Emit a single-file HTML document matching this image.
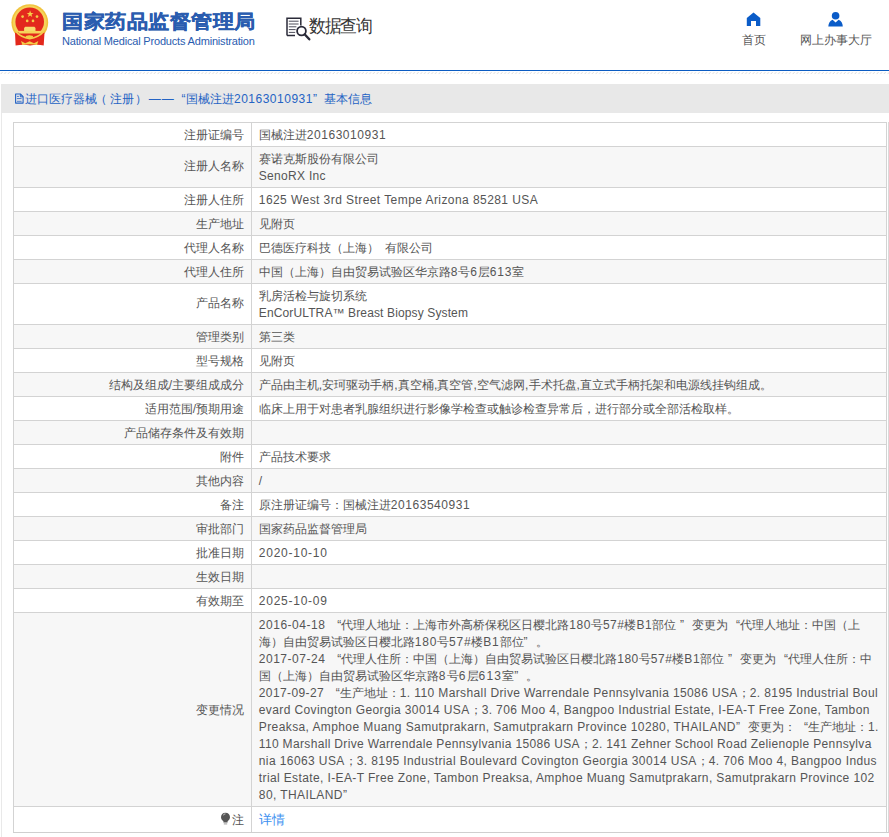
<!DOCTYPE html>
<html><head><meta charset="utf-8">
<style>
*{margin:0;padding:0;box-sizing:border-box}
html,body{width:889px;height:837px;overflow:hidden;background:#fff;font-family:"Liberation Sans",sans-serif;color:#555}
div{position:absolute;white-space:nowrap}
.bl{left:0;top:70px;width:889px;height:1px;background:#0b5cc2}
.hatch{left:0;top:72px;width:889px;height:2px;background:repeating-linear-gradient(45deg,#fff 0 1.6px,#dcdcdc 1.6px 2.6px,#fff 2.6px 3.6px)}
.title1{left:62px;top:8px;font-size:21px;line-height:26px;font-weight:bold;color:#2a5caf;letter-spacing:0.5px;transform:scaleY(0.9);transform-origin:0 23px;-webkit-text-stroke:0.4px #2a5caf}
.title2{left:62px;top:35px;font-size:11px;line-height:12px;color:#2a5caf;letter-spacing:-0.18px}
.sq{left:309px;top:14px;font-size:18px;line-height:24px;color:#333;letter-spacing:-1.4px;transform:scaleX(0.937);transform-origin:0 0}
.nav{top:32px;font-size:12px;line-height:17px;color:#555}
.pl{left:1px;top:113px;width:1px;height:724px;background:#e9e9e9}
.bar{left:1px;top:84px;width:888px;height:29px;background:#e8e8e8}
.bt{top:91px;font-size:12px;line-height:17px;color:#2463c4}
.bg{left:14px;width:872px;background:#f7f7f7}
.hl{left:13px;width:874px;height:1px;background:#d3d3d3}
.vl{top:122px;width:1px;height:710px;background:#d3d3d3}
.lab{right:645px;font-size:12px;line-height:17px;color:#555}
.val{left:258.8px;font-size:12px;line-height:17px;color:#555}
.q1{display:inline-block;width:12px;text-align:right}.q2{display:inline-block;width:12px;text-align:left}
a{color:#3b8ff0;text-decoration:none;font-size:13px}
</style></head><body>
<svg style="position:absolute;left:8px;top:2px" width="44" height="48" viewBox="8 2 44 48">
  <circle cx="29.8" cy="22.6" r="18.4" fill="#f1c33c"/>
  <circle cx="29.8" cy="22.4" r="16.8" fill="#f6d35a"/>
  <path d="M15 32.5 H44.5 L43.7 45.4 Q37 44.2 30 45.4 Q23 44.2 15.6 45.6 Z" fill="#e3281c"/>
  <circle cx="29.7" cy="21.8" r="14.3" fill="#e3291d"/>
  <path d="M15.8 31.5 Q21 37.5 29.7 38.6 Q38.5 37.5 43.8 31.5" fill="none" stroke="#f4cf4c" stroke-width="1.7"/>
  <polygon points="30.1,10.4 31,12.9 33.5,12.9 31.5,14.4 32.2,16.9 30.1,15.4 28,16.9 28.7,14.4 26.7,12.9 29.2,12.9" fill="#f6d048"/>
  <circle cx="22.6" cy="16.6" r="1.35" fill="#f3cc48"/>
  <circle cx="37" cy="16.6" r="1.35" fill="#f3cc48"/>
  <circle cx="27.2" cy="20.9" r="1.35" fill="#f3cc48"/>
  <circle cx="33" cy="20.9" r="1.35" fill="#f3cc48"/>
  <path d="M25.2 26.8H34.4L35.5 28V30.9H24.1V28Z" fill="#f8dc6e"/>
  <rect x="18.9" y="30.9" width="22.7" height="2.6" fill="#f6d35a"/>
  <ellipse cx="29.4" cy="36.8" rx="3.7" ry="1.5" fill="#f3cc48"/>
  <path d="M21 41 L25.2 43.2 L29.6 41.2 L34 43.2 L38.3 41 L37 45 Q30 43.6 22.3 45 Z" fill="#f3cc48"/>
</svg>
<div class="title1">国家药品监督管理局</div>
<div class="title2">National Medical Products Administration</div>
<svg style="position:absolute;left:284px;top:16px" width="28" height="26" viewBox="284 16 28 26">
  <path d="M287 35.5V18.3H300.8V25.5" fill="none" stroke="#2a2a38" stroke-width="1.5"/>
  <path d="M287 35.5H295" fill="none" stroke="#2a2a38" stroke-width="1.5"/>
  <path d="M288.8 21.2H298.6M288.8 24H298.6M288.8 26.8H296.4M288.8 29.6H295.6M288.8 32.4H295.2" stroke="#3a3a48" stroke-width="0.9"/>
  <circle cx="301.5" cy="31" r="4.4" fill="#fff" stroke="#2a2a38" stroke-width="1.8"/>
  <path d="M304.6 34.3L309.3 39.3" stroke="#2a2a38" stroke-width="2.4" stroke-linecap="round"/>
</svg>
<div class="sq">数据查询</div>
<svg style="position:absolute;left:746px;top:12px" width="15" height="15" viewBox="0 0 15 15">
  <path d="M7.5 0.5L14.3 6V14H10V9H5V14H0.8V6Z" fill="#0b5cc8"/>
</svg>
<div class="nav" style="left:741.5px">首页</div>
<svg style="position:absolute;left:827px;top:11px" width="17" height="17" viewBox="0 0 17 17">
  <circle cx="8.6" cy="4.7" r="3.8" fill="#0b5cc8"/>
  <path d="M1.3 15.5Q1.6 10.6 5.6 8.8L8.6 11.6L11.6 8.8Q15.6 10.6 15.8 15.5Z" fill="#0b5cc8"/>
</svg>
<div class="nav" style="left:799.6px">网上办事大厅</div>
<div class="bl"></div>
<svg style="position:absolute;left:0;top:71px" width="889" height="4"><defs><pattern id="hp" width="3.65" height="4" patternUnits="userSpaceOnUse"><path d="M0.6 3.1L2.4 1.1" stroke="#d6d6d6" stroke-width="0.9"/></pattern></defs><rect width="889" height="4" fill="url(#hp)"/></svg>
<div class="bar"></div>
<div class="pl"></div>
<svg style="position:absolute;left:13px;top:91px" width="12" height="15" viewBox="0 0 12 15">
  <path d="M2.6 3H7.4L10.1 5.7V12.1H2.6Z" fill="none" stroke="#2463c4" stroke-width="1.1" stroke-linejoin="round"/>
  <path d="M7.3 3.2V5.8H10" fill="none" stroke="#2463c4" stroke-width="1"/>
  <path d="M3.9 5.4H5.9M3.9 7.6H8.6M3.9 10.3H8.6" stroke="#3a6fc8" stroke-width="0.9"/>
</svg>
<div class="bt" style="left:24.8px">进口医疗器械</div>
<div class="bt" style="left:94.7px">（</div>
<div class="bt" style="left:109.6px">注册</div>
<div class="bt" style="left:134.6px">）</div>
<div class="bt" style="left:148.8px;letter-spacing:1px">——</div>
<div class="bt" style="left:181.6px">“</div>
<div class="bt" style="left:186px">国械注进<span style="letter-spacing:0.5px">20163010931”</span></div>
<div class="bt" style="left:324px">基本信息</div>
<div class="bg" style="top:147px;height:40px"></div>
<div class="bg" style="top:212px;height:23px"></div>
<div class="bg" style="top:260px;height:23px"></div>
<div class="bg" style="top:325px;height:23px"></div>
<div class="bg" style="top:373px;height:23px"></div>
<div class="bg" style="top:421px;height:23px"></div>
<div class="bg" style="top:469px;height:23px"></div>
<div class="bg" style="top:517px;height:23px"></div>
<div class="bg" style="top:565px;height:23px"></div>
<div class="bg" style="top:613px;height:193px"></div>
<div class="hl" style="top:122px"></div>
<div class="hl" style="top:146px"></div>
<div class="hl" style="top:187px"></div>
<div class="hl" style="top:211px"></div>
<div class="hl" style="top:235px"></div>
<div class="hl" style="top:259px"></div>
<div class="hl" style="top:283px"></div>
<div class="hl" style="top:324px"></div>
<div class="hl" style="top:348px"></div>
<div class="hl" style="top:372px"></div>
<div class="hl" style="top:396px"></div>
<div class="hl" style="top:420px"></div>
<div class="hl" style="top:444px"></div>
<div class="hl" style="top:468px"></div>
<div class="hl" style="top:492px"></div>
<div class="hl" style="top:516px"></div>
<div class="hl" style="top:540px"></div>
<div class="hl" style="top:564px"></div>
<div class="hl" style="top:588px"></div>
<div class="hl" style="top:612px"></div>
<div class="hl" style="top:806px"></div>
<div class="hl" style="top:832px;width:876px;background:#cfcfcf"></div>
<div class="vl" style="left:13px"></div>
<div class="vl" style="left:251px"></div>
<div class="vl" style="left:886px"></div>
<div class="vl" style="left:888px;height:710px;background:#d9d9d9"></div>
<div class="lab" style="top:127.0px">注册证编号</div>
<div class="lab" style="top:158.3px">注册人名称</div>
<div class="lab" style="top:192.0px">注册人住所</div>
<div class="lab" style="top:216.0px">生产地址</div>
<div class="lab" style="top:240.0px">代理人名称</div>
<div class="lab" style="top:264.0px">代理人住所</div>
<div class="lab" style="top:295.3px">产品名称</div>
<div class="lab" style="top:329.0px">管理类别</div>
<div class="lab" style="top:353.0px">型号规格</div>
<div class="lab" style="top:377.0px">结构及组成/主要组成成分</div>
<div class="lab" style="top:401.0px">适用范围/预期用途</div>
<div class="lab" style="top:425.0px">产品储存条件及有效期</div>
<div class="lab" style="top:449.0px">附件</div>
<div class="lab" style="top:473.0px">其他内容</div>
<div class="lab" style="top:497.0px">备注</div>
<div class="lab" style="top:521.0px">审批部门</div>
<div class="lab" style="top:545.0px">批准日期</div>
<div class="lab" style="top:569.0px">生效日期</div>
<div class="lab" style="top:593.0px">有效期至</div>
<div class="lab" style="top:702.0px">变更情况</div>
<div class="lab" style="top:812px"><svg width="11" height="13" viewBox="0 0 11 13" style="vertical-align:-1px;margin-right:1px"><path d="M5.5 0.8C8.3 0.8 10 2.8 10 5.2C10 7.2 8.6 8.3 7.6 9.2V10.6H3.4V9.2C2.4 8.3 1 7.2 1 5.2C1 2.8 2.7 0.8 5.5 0.8Z" fill="#555"/><path d="M3.8 11.4H7.2V12.4H3.8Z" fill="#999"/><path d="M3.2 3.2Q4 2 5.4 1.9" stroke="#ddd" stroke-width="0.9" fill="none"/></svg>注</div>
<div class="val" id="v0" style="top:127px">国械注进<span class="e" style="letter-spacing:0.538px">20163010931</span></div>
<div class="val" id="v1" style="top:151px">赛诺克斯股份有限公司</div>
<div class="val" id="v2" style="top:168px"><span class="e" style="letter-spacing:0.300px">SenoRX Inc</span></div>
<div class="val" id="v3" style="top:192px"><span class="e" style="letter-spacing:0.432px">1625 West 3rd Street Tempe Arizona 85281 USA</span></div>
<div class="val" id="v4" style="top:216px">见附页</div>
<div class="val" id="v5" style="top:240px">巴德医疗科技（上海）<span class="e" style="letter-spacing:2.600px"> </span>有限公司</div>
<div class="val" id="v6" style="top:264px">中国（上海）自由贸易试验区华京路<span class="e" style="letter-spacing:0.800px">8</span>号<span class="e" style="letter-spacing:0.800px">6</span>层<span class="e" style="letter-spacing:0.800px">613</span>室</div>
<div class="val" id="v7" style="top:288px">乳房活检与旋切系统</div>
<div class="val" id="v8" style="top:305px"><span class="e" style="letter-spacing:0.127px">EnCorULTRA™ Breast Biopsy System</span></div>
<div class="val" id="v9" style="top:329px">第三类</div>
<div class="val" id="v10" style="top:353px">见附页</div>
<div class="val" id="v11" style="top:377px">产品由主机<span class="e" style="letter-spacing:0.199px">,</span>安珂驱动手柄<span class="e" style="letter-spacing:0.199px">,</span>真空桶<span class="e" style="letter-spacing:0.199px">,</span>真空管<span class="e" style="letter-spacing:0.199px">,</span>空气滤网<span class="e" style="letter-spacing:0.199px">,</span>手术托盘<span class="e" style="letter-spacing:0.199px">,</span>直立式手柄托架和电源线挂钩组成。</div>
<div class="val" id="v12" style="top:401px">临床上用于对患者乳腺组织进行影像学检查或触诊检查异常后，进行部分或全部活检取样。</div>
<div class="val" id="v13" style="top:449px">产品技术要求</div>
<div class="val" id="v14" style="top:473px"><span class="e">/</span></div>
<div class="val" id="v15" style="top:497px">原注册证编号：国械注进<span class="e" style="letter-spacing:0.546px">20163540931</span></div>
<div class="val" id="v16" style="top:521px">国家药品监督管理局</div>
<div class="val" id="v17" style="top:545px"><span class="e" style="letter-spacing:0.750px">2020-10-10</span></div>
<div class="val" id="v18" style="top:593px"><span class="e" style="letter-spacing:0.750px">2025-10-09</span></div>
<div class="val" id="v19" style="top:617px"><span class="e" style="letter-spacing:0.523px">2016-04-18 </span><span class="q1">“</span>代理人地址：上海市外高桥保税区日樱北路<span class="e" style="letter-spacing:0.523px">180</span>号<span class="e" style="letter-spacing:0.523px">57#</span>楼<span class="e" style="letter-spacing:0.523px">B1</span>部位<span class="e" style="letter-spacing:0.523px"> </span><span class="q2">”</span>变更为<span class="q1">“</span>代理人地址：中国（上</div>
<div class="val" id="v20" style="top:634px">海）自由贸易试验区日樱北路<span class="e" style="letter-spacing:0.750px">180</span>号<span class="e" style="letter-spacing:0.750px">57#</span>楼<span class="e" style="letter-spacing:0.750px">B1</span>部位<span class="q2">”</span>。</div>
<div class="val" id="v21" style="top:651px"><span class="e" style="letter-spacing:0.517px">2017-07-24 </span><span class="q1">“</span>代理人住所：中国（上海）自由贸易试验区日樱北路<span class="e" style="letter-spacing:0.517px">180</span>号<span class="e" style="letter-spacing:0.517px">57#</span>楼<span class="e" style="letter-spacing:0.517px">B1</span>部位<span class="e" style="letter-spacing:0.517px"> </span><span class="q2">”</span>变更为<span class="q1">“</span>代理人住所：中</div>
<div class="val" id="v22" style="top:668px">国（上海）自由贸易试验区华京路<span class="e" style="letter-spacing:1.200px">8</span>号<span class="e" style="letter-spacing:1.200px">6</span>层<span class="e" style="letter-spacing:1.200px">613</span>室<span class="q2">”</span>。</div>
<div class="val" id="v23" style="top:685px"><span class="e" style="letter-spacing:0.385px">2017-09-27 </span><span class="q1">“</span>生产地址：<span class="e" style="letter-spacing:0.385px">1. 110 Marshall Drive Warrendale Pennsylvania 15086 USA</span>；<span class="e" style="letter-spacing:0.385px">2. 8195 Industrial Boul</span></div>
<div class="val" id="v24" style="top:702px"><span class="e" style="letter-spacing:0.385px">evard Covington Georgia 30014 USA</span>；<span class="e" style="letter-spacing:0.385px">3. 706 Moo 4, Bangpoo Industrial Estate, I-EA-T Free Zone, Tambon</span></div>
<div class="val" id="v25" style="top:719px"><span class="e" style="letter-spacing:0.399px">Preaksa, Amphoe Muang Samutprakarn, Samutprakarn Province 10280, THAILAND</span><span class="q2">”</span>变更为：<span class="q1">“</span>生产地址：<span class="e" style="letter-spacing:0.399px">1.</span></div>
<div class="val" id="v26" style="top:736px"><span class="e" style="letter-spacing:0.339px">110 Marshall Drive Warrendale Pennsylvania 15086 USA</span>；<span class="e" style="letter-spacing:0.339px">2. 141 Zehner School Road Zelienople Pennsylva</span></div>
<div class="val" id="v27" style="top:753px"><span class="e" style="letter-spacing:0.401px">nia 16063 USA</span>；<span class="e" style="letter-spacing:0.401px">3. 8195 Industrial Boulevard Covington Georgia 30014 USA</span>；<span class="e" style="letter-spacing:0.401px">4. 706 Moo 4, Bangpoo Indus</span></div>
<div class="val" id="v28" style="top:770px"><span class="e" style="letter-spacing:0.379px">trial Estate, I-EA-T Free Zone, Tambon Preaksa, Amphoe Muang Samutprakarn, Samutprakarn Province 102</span></div>
<div class="val" id="v29" style="top:787px"><span class="e" style="letter-spacing:0.417px">80, THAILAND</span><span class="q2">”</span></div>
<div class="val" style="top:811px"><a>详情</a></div>
</body></html>
